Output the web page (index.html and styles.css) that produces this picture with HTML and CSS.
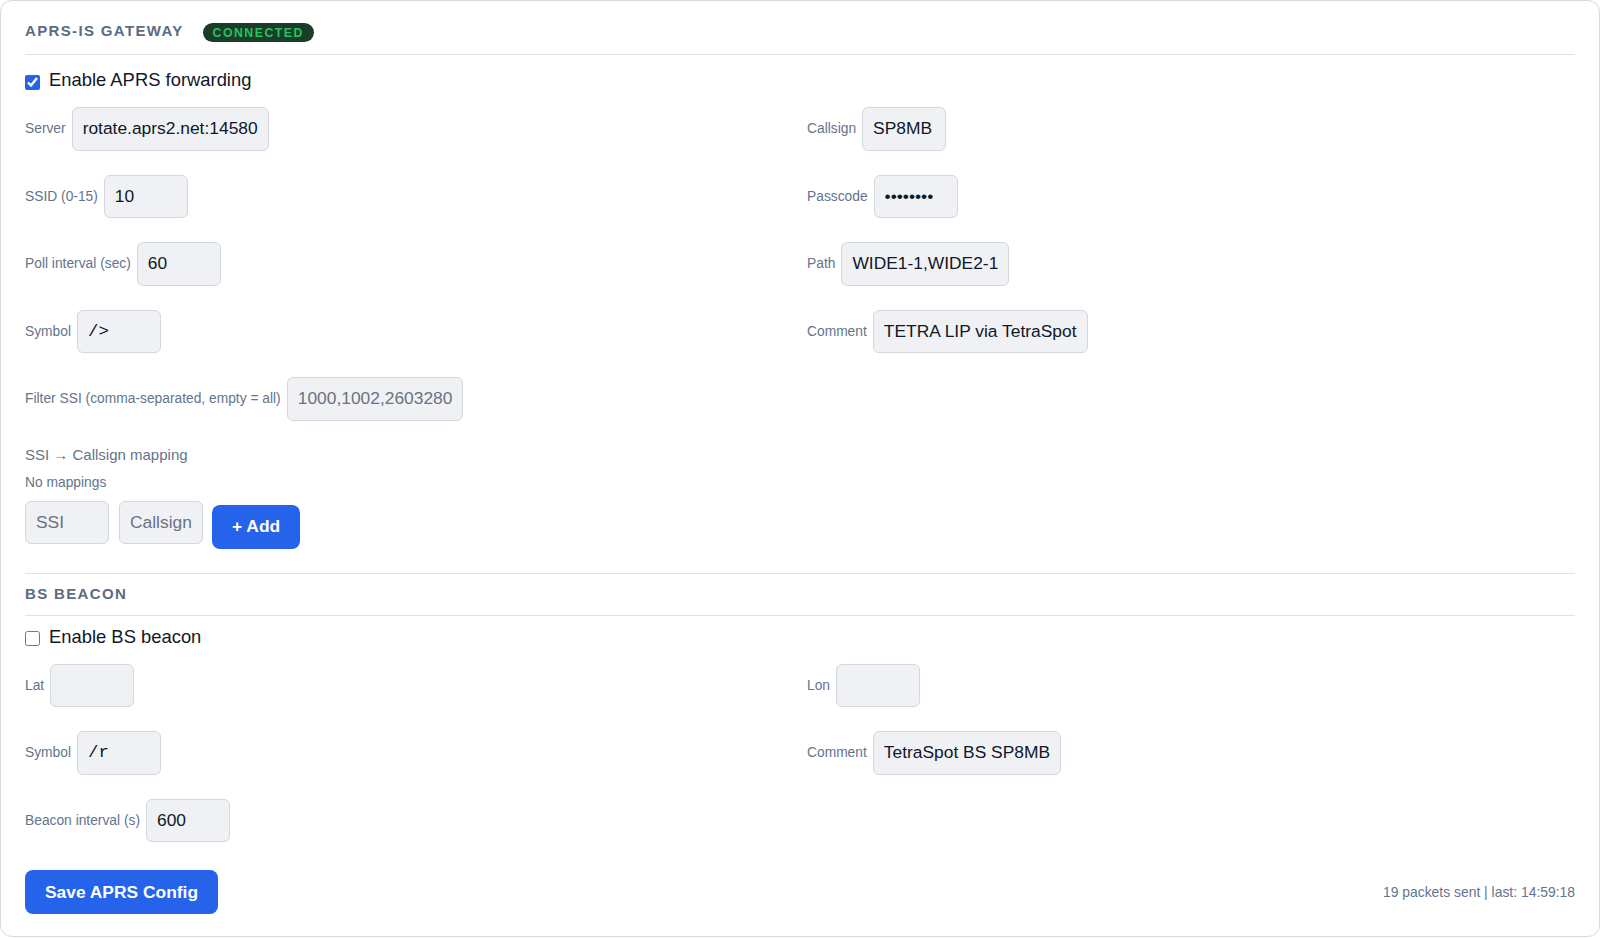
FILE: index.html
```html
<!DOCTYPE html>
<html lang="en">
<head>
  <meta charset="UTF-8" />
  <meta name="viewport" content="width=device-width, initial-scale=1.0"/>
  <title>APRS Settings</title>
  <link rel="stylesheet" href="styles.css">
</head>
<body>
  <div class="card">
    <div class="section-head">
      <span class="section-title">APRS-IS Gateway</span>
      <span class="badge">Connected</span>
    </div>

    <label class="check-row check-first">
      <input type="checkbox" checked>
      <span>Enable APRS forwarding</span>
    </label>

    <div class="fields">
      <div class="field">
        <label>Server</label>
        <input type="text" value="rotate.aprs2.net:14580">
      </div>
      <div class="field">
        <label>Callsign</label>
        <input type="text" value="SP8MB">
      </div>
      <div class="field">
        <label>SSID (0-15)</label>
        <input type="text" value="10">
      </div>
      <div class="field">
        <label>Passcode</label>
        <input type="password" value="12345678">
      </div>
      <div class="field">
        <label>Poll interval (sec)</label>
        <input type="text" value="60">
      </div>
      <div class="field">
        <label>Path</label>
        <input type="text" value="WIDE1-1,WIDE2-1">
      </div>
      <div class="field">
        <label>Symbol</label>
        <input type="text" class="mono" value="/&gt;">
      </div>
      <div class="field">
        <label>Comment</label>
        <input type="text" value="TETRA LIP via TetraSpot">
      </div>
      <div class="field">
        <label>Filter SSI (comma-separated, empty = all)</label>
        <input type="text" placeholder="1000,1002,2603280">
      </div>
    </div>

    <div class="mapping">
      <div class="mapping-title">SSI → Callsign mapping</div>
      <div class="mapping-empty">No mappings</div>
      <div class="mapping-add">
        <input type="text" placeholder="SSI">
        <input type="text" placeholder="Callsign">
        <button class="btn btn-add">+ Add</button>
      </div>
    </div>

    <div class="section">
      <div class="section-head">
        <span class="section-title">BS Beacon</span>
      </div>

      <label class="check-row">
        <input type="checkbox">
        <span>Enable BS beacon</span>
      </label>

      <div class="fields">
        <div class="field">
          <label>Lat</label>
          <input type="text">
        </div>
        <div class="field">
          <label>Lon</label>
          <input type="text">
        </div>
        <div class="field">
          <label>Symbol</label>
          <input type="text" class="mono" value="/r">
        </div>
        <div class="field">
          <label>Comment</label>
          <input type="text" value="TetraSpot BS SP8MB">
        </div>
        <div class="field">
          <label>Beacon interval (s)</label>
          <input type="text" value="600">
        </div>
      </div>
    </div>

    <div class="footer">
      <button class="btn">Save APRS Config</button>
      <span class="status">19 packets sent | last: 14:59:18</span>
    </div>
  </div>
</body>
</html>
```

FILE: styles.css
```css
body {
  margin: 0;
  background: #ffffff;
  font-family: "Liberation Sans", Arial, sans-serif;
  color: #111827;
}
.card {
  box-sizing: border-box;
  width: 1600px;
  border: 1px solid #d7dae1;
  border-radius: 12px;
  padding: 18px 24px 22px 24px;
  background: #ffffff;
}
.section-head {
  display: flex;
  align-items: center;
  gap: 19px;
  min-height: 19px;
  padding-bottom: 12px;
  border-bottom: 1px solid #dfe2e8;
}
.section-title {
  font-size: 15px;
  font-weight: bold;
  letter-spacing: 0.09em;
  text-transform: uppercase;
  color: #5b6b80;
}
.badge {
  display: inline-flex;
  align-items: center;
  height: 19px;
  margin-top: 4px;
  padding: 0 10px;
  border-radius: 10px;
  background: #1a3d2a;
  color: #22c55e;
  font-size: 12.3px;
  font-weight: bold;
  letter-spacing: 0.12em;
  text-transform: uppercase;
}
.check-row {
  display: flex;
  align-items: center;
  gap: 9px;
  height: 22px;
  margin-top: 10px;
  font-size: 18.4px;
  color: #111827;
  cursor: pointer;
}
.check-row.check-first {
  margin-top: 14px;
}
.check-row input {
  width: 15px;
  height: 15px;
  margin: 4px 0 0 0;
  accent-color: #2563eb;
}
.fields {
  display: grid;
  grid-template-columns: 1fr 1fr;
  column-gap: 14px;
  row-gap: 24px;
  margin-top: 16px;
}
.field {
  display: flex;
  align-items: center;
  gap: 6px;
}
.field label {
  font-size: 13.8px;
  color: #64748b;
}
input[type="text"],
input[type="password"] {
  box-sizing: border-box;
  field-sizing: content;
  min-width: 84px;
  height: 43.5px;
  padding: 0 10px;
  border: 1px solid #d3d7de;
  border-radius: 6px;
  background: #f0f1f5;
  font-family: "Liberation Sans", Arial, sans-serif;
  font-size: 17.4px;
  color: #111827;
  outline: none;
}
input.mono {
  font-family: "Liberation Mono", "DejaVu Sans Mono", monospace;
}
input::placeholder {
  color: #6b7280;
}
.mapping {
  margin-top: 25px;
}
.mapping-title {
  font-size: 15px;
  line-height: 18px;
  color: #64748b;
}
.mapping-empty {
  margin-top: 10px;
  font-size: 13.8px;
  line-height: 17px;
  color: #64748b;
}
.mapping-add {
  display: flex;
  align-items: flex-start;
  gap: 10px;
  margin-top: 10px;
}
.btn {
  height: 44px;
  padding: 0 20px;
  border: none;
  border-radius: 8px;
  background: #2563eb;
  color: #ffffff;
  font-family: "Liberation Sans", Arial, sans-serif;
  font-size: 17.4px;
  font-weight: bold;
  cursor: pointer;
}
.btn:hover {
  background: #1d4ed8;
}
.btn-add {
  margin-top: 4px;
  margin-left: -1px;
}
.section {
  margin-top: 24px;
  padding-top: 10px;
  border-top: 1px solid #dfe2e8;
}
.footer {
  display: flex;
  justify-content: space-between;
  align-items: center;
  margin-top: 28px;
}
.status {
  font-size: 13.9px;
  color: #64748b;
}
```
